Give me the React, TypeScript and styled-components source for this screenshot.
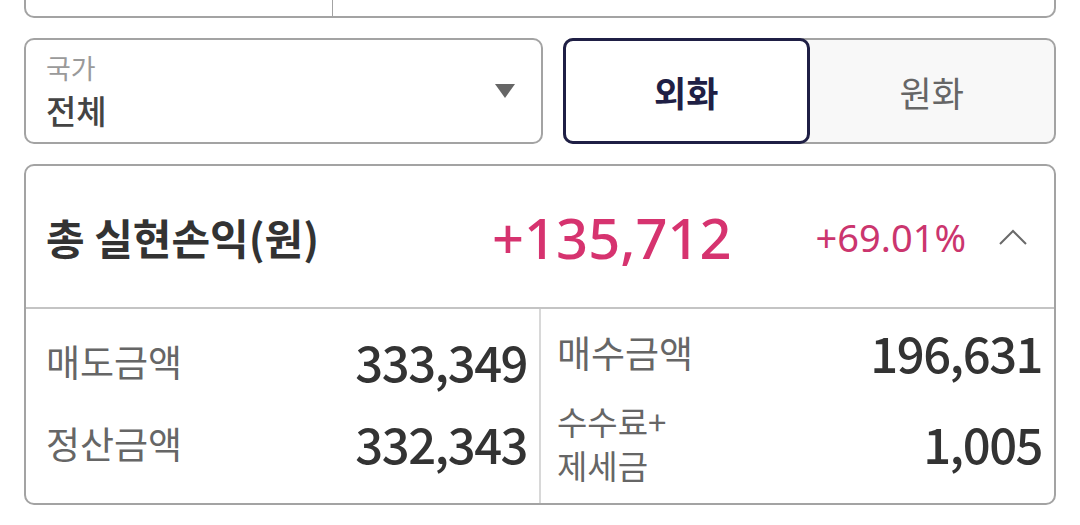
import React from "react";
import styled, { createGlobalStyle } from "styled-components";

const GlobalStyle = createGlobalStyle`
    html, body {
        margin: 0;
        padding: 0;
        background: #ffffff;
    }
    body {
        font-family: "Noto Sans", "Noto Sans CJK KR", sans-serif;
        color: #333333;
        overflow: hidden;
    }
`;

const Page = styled.div`
    width: 1032px;
    padding: 0 24px;
    display: flex;
    flex-direction: column;
    gap: 20px;
`;

const TopCard = styled.div`
    height: 16px;
    border: 2px solid #a3a3a3;
    border-top: none;
    border-radius: 0 0 10px 10px;
    display: grid;
    grid-template-columns: 307px 1fr;
`;

const TopCell = styled.div`
    border-right: 1px solid #a3a3a3;
`;

const FilterRow = styled.div`
    display: grid;
    grid-template-columns: 519px 1fr;
    gap: 20px;
    height: 106px;
`;

const Select = styled.div`
    border: 2px solid #a3a3a3;
    border-radius: 10px;
    display: flex;
    align-items: center;
    justify-content: space-between;
    padding: 0 26px 0 20px;
`;

const SelectText = styled.div`
    display: flex;
    flex-direction: column;
    font-family: "Noto Sans CJK KR", sans-serif;
`;

const SelectLabel = styled.span`
    font-size: 27px;
    line-height: 38px;
    color: #9a9a9a;
`;

const SelectValue = styled.span`
    font-size: 33px;
    line-height: 46px;
    color: #444444;
    font-weight: 500;
`;

const Toggle = styled.div`
    display: grid;
    grid-template-columns: 1fr 1fr;
    border: 2px solid #a3a3a3;
    border-radius: 10px;
    background: #f8f8f8;
`;

const ToggleButton = styled.div<{ $active?: boolean }>`
    display: flex;
    align-items: center;
    justify-content: center;
    margin: ${p => (p.$active ? "-2px 0 -2px -2px" : "0")};
    border: ${p => (p.$active ? "3px solid #1f1f45" : "none")};
    border-radius: 10px;
    background: ${p => (p.$active ? "#ffffff" : "transparent")};
    font-family: "Noto Sans CJK KR", sans-serif;
    font-size: 35px;
    font-weight: ${p => (p.$active ? 700 : 400)};
    color: ${p => (p.$active ? "#1f1f45" : "#666666")};
`;

const Card = styled.div`
    border: 2px solid #a3a3a3;
    border-radius: 10px;
    display: flex;
    flex-direction: column;
`;

const CardHeader = styled.div`
    height: 141px;
    display: flex;
    align-items: center;
    padding: 0 26px 0 20px;
    border-bottom: 2px solid #c4c4c4;
`;

const HeaderTitle = styled.div`
    font-family: "Noto Sans CJK KR", sans-serif;
    font-size: 42px;
    font-weight: 700;
    color: #333333;
    flex: 1;
`;

const Profit = styled.div`
    font-family: "Noto Sans", sans-serif;
    font-size: 56px;
    font-weight: 500;
    color: #d6336f;
    margin-right: 84px;
`;

const Rate = styled.div`
    font-family: "Noto Sans", sans-serif;
    font-size: 38px;
    color: #cb356e;
    margin-right: 32px;
`;

const CardBody = styled.div`
    display: grid;
    grid-template-columns: 515px 1fr;
    height: 194px;
`;

const Column = styled.div<{ $first?: boolean }>`
    display: flex;
    flex-direction: column;
    justify-content: center;
    gap: 12px;
    padding: 0 ${p => (p.$first ? "12px 8px 20px" : "12px 8px 16px")};
    border-right: ${p => (p.$first ? "2px solid #d8d8d8" : "none")};
`;

const Row = styled.div`
    display: flex;
    align-items: center;
    justify-content: space-between;
    min-height: 70px;
`;

const Label = styled.div`
    font-family: "Noto Sans CJK KR", sans-serif;
    font-size: 37px;
    line-height: 44px;
    color: #666666;
`;

const SmallLabel = styled(Label)`
    font-size: 33px;
    line-height: 44px;
`;

const Value = styled.div`
    font-family: "Noto Sans CJK KR", sans-serif;
    font-size: 49px;
    line-height: 56px;
    font-weight: 500;
    color: #333333;
    letter-spacing: -1.5px;
`;

const Caret = () => (
    <svg width="20" height="14" viewBox="0 0 20 14">
        <path d="M0 0 H20 L10 14 Z" fill="#666666" />
    </svg>
);

const ChevronUp = () => (
    <svg width="30" height="18" viewBox="0 0 30 18">
        <path d="M2 16 L15 3 L28 16" fill="none" stroke="#6a6a6a" strokeWidth="2" />
    </svg>
);

export default function App() {
    return (
        <>
            <GlobalStyle />
            <Page>
                <TopCard>
                    <TopCell />
                    <div />
                </TopCard>
                <FilterRow>
                    <Select>
                        <SelectText>
                            <SelectLabel>국가</SelectLabel>
                            <SelectValue>전체</SelectValue>
                        </SelectText>
                        <Caret />
                    </Select>
                    <Toggle>
                        <ToggleButton $active>외화</ToggleButton>
                        <ToggleButton>원화</ToggleButton>
                    </Toggle>
                </FilterRow>
                <Card>
                    <CardHeader>
                        <HeaderTitle>총 실현손익(원)</HeaderTitle>
                        <Profit>+135,712</Profit>
                        <Rate>+69.01%</Rate>
                        <ChevronUp />
                    </CardHeader>
                    <CardBody>
                        <Column $first>
                            <Row>
                                <Label>매도금액</Label>
                                <Value>333,349</Value>
                            </Row>
                            <Row>
                                <Label>정산금액</Label>
                                <Value>332,343</Value>
                            </Row>
                        </Column>
                        <Column>
                            <Row>
                                <Label>매수금액</Label>
                                <Value>196,631</Value>
                            </Row>
                            <Row>
                                <SmallLabel>
                                    수수료+
                                    <br />
                                    제세금
                                </SmallLabel>
                                <Value>1,005</Value>
                            </Row>
                        </Column>
                    </CardBody>
                </Card>
            </Page>
        </>
    );
}
